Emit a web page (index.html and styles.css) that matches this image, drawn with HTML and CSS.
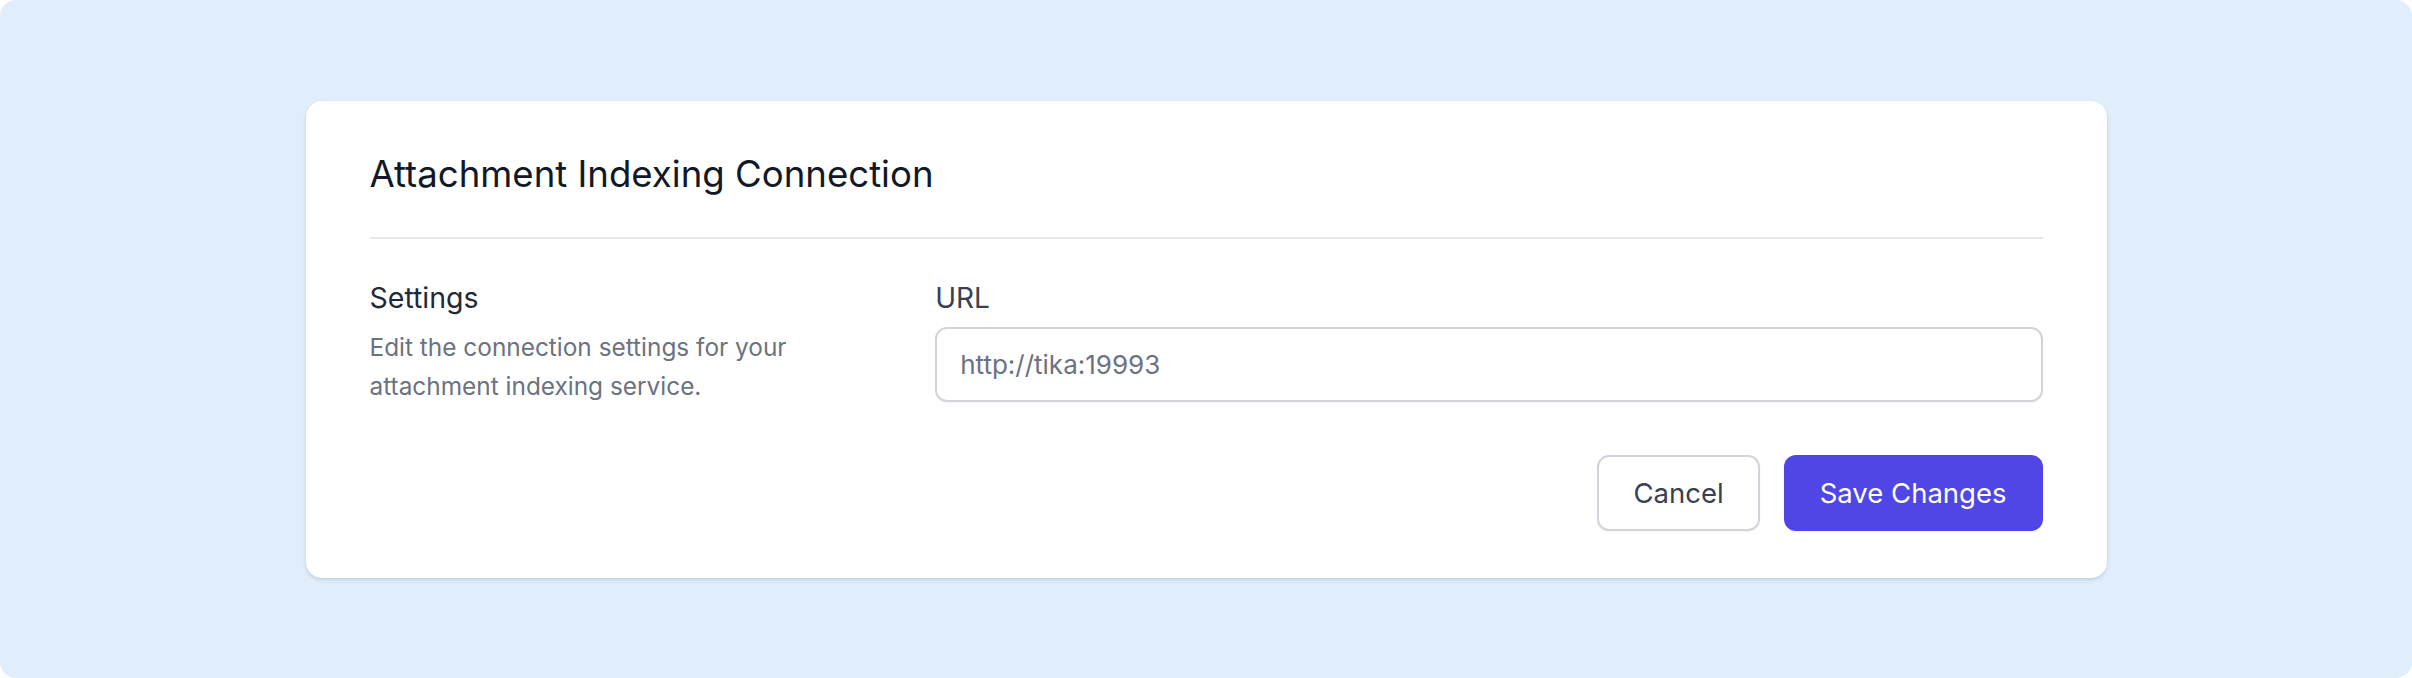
FILE: index.html
```html
<!DOCTYPE html>
<html lang="en">
<head>
<meta charset="utf-8">
<title>Attachment Indexing Connection</title>
<link rel="stylesheet" href="styles.css">
</head>
<body>
<div class="frame">
  <section class="card">
    <h1 class="card-title">Attachment Indexing Connection</h1>
    <hr class="divider">
    <div class="settings-grid">
      <div class="intro">
        <h2 class="intro-title">Settings</h2>
        <p class="intro-text">Edit the connection settings for your attachment indexing service.</p>
      </div>
      <div class="field">
        <label class="field-label" for="url">URL</label>
        <input class="field-input" id="url" type="text" placeholder="http://tika:19993">
      </div>
    </div>
    <div class="actions">
      <button class="btn btn-secondary" type="button">Cancel</button>
      <button class="btn btn-primary" type="button">Save Changes</button>
    </div>
  </section>
</div>
</body>
</html>
```

FILE: styles.css
```css
* { box-sizing: border-box; }

html, body {
  margin: 0;
  padding: 0;
  background: #ffffff;
}

body {
  font-family: Inter, "Noto Sans", "Liberation Sans", sans-serif;
  width: 2412px;
  height: 678px;
  overflow: hidden;
}

.frame {
  width: 2412px;
  height: 678px;
  background: #e0edfb;
  border-radius: 16px;
  display: flex;
  align-items: center;
  justify-content: center;
}

.card {
  width: 1801px;
  height: 477px;
  background: #ffffff;
  border-radius: 16px;
  box-shadow: 0 2px 4px rgba(15, 23, 42, 0.10), 0 1px 2px rgba(15, 23, 42, 0.06);
  padding: 49px 64px 47px 64px;
  display: flex;
  flex-direction: column;
}

.card-title {
  margin: 0;
  font-size: 36.6px;
  line-height: 48px;
  font-weight: 400;
  color: #111827;
}

.divider {
  margin: 39px 0 0 0;
  border: 0;
  height: 2px;
  background: #e5e7eb;
}

.settings-grid {
  margin-top: 41px;
  display: grid;
  grid-template-columns: repeat(3, minmax(0, 1fr));
  column-gap: 24px;
}

.intro {
  grid-column: span 1;
}

.intro-title {
  margin: 0;
  font-size: 28.5px;
  line-height: 36px;
  font-weight: 400;
  color: #1f2937;
}

.intro-text {
  margin: 12px 0 0 0;
  max-width: 500px;
  font-size: 24.4px;
  line-height: 39px;
  color: #6b7280;
}

.field {
  grid-column: span 2;
  display: flex;
  flex-direction: column;
}

.field-label {
  font-size: 28px;
  line-height: 36px;
  font-weight: 400;
  color: #374151;
}

.field-input {
  margin-top: 11px;
  height: 75px;
  border: 2px solid #d1d5db;
  border-radius: 12px;
  padding: 0 23px;
  font-family: inherit;
  font-size: 26px;
  color: #374151;
  background: #ffffff;
  box-shadow: 0 1px 2px rgba(0, 0, 0, 0.05);
  outline: none;
}

.field-input::placeholder {
  color: #6b7280;
}

.actions {
  margin-top: 49px;
  display: flex;
  justify-content: flex-end;
  gap: 24px;
}

.btn {
  height: 76px;
  padding: 0 34px;
  border-radius: 12px;
  font-family: inherit;
  font-size: 27.5px;
  font-weight: 400;
  border: 2px solid transparent;
  box-shadow: 0 1px 2px rgba(0, 0, 0, 0.05);
  cursor: pointer;
}

.btn-secondary {
  background: #ffffff;
  border-color: #d1d5db;
  color: #374151;
}

.btn-primary {
  background: #4f46e5;
  color: #ffffff;
}
```
